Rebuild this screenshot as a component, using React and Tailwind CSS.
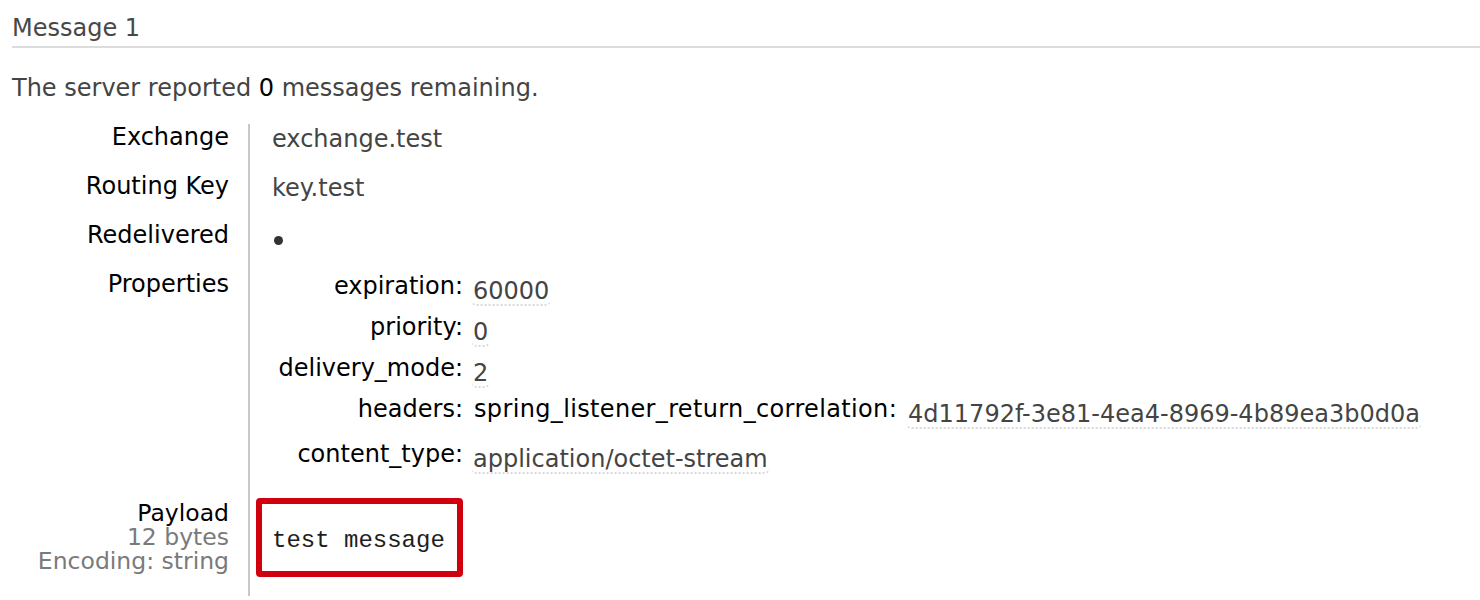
import React from 'react';

const font = { fontFamily: '"DejaVu Sans", Verdana, sans-serif' };

function Val({ children }) {
  return (
    <span className="inline-block rounded-[6px] border-b-2 border-dotted border-[#d8d8d8] px-[2px] leading-[26px] text-[#444]">
      {children}
    </span>
  );
}

function PropRow({ label, h = 'h-[41px]', children }) {
  return (
    <div className={`flex ${h} pt-[2px]`}>
      <div className="w-[191px] shrink-0 text-right leading-[26px] text-black">{label}</div>
      <div className="pl-[8px]">{children}</div>
    </div>
  );
}

function Row({ label, h, children }) {
  return (
    <div className={`grid grid-cols-[248px_1fr] ${h}`}>
      <div className="pr-[19px] text-right leading-[26px] text-black">{label}</div>
      <div className="border-l-2 border-[#c8c8c8] pl-[22px] pt-[2px] leading-[26px] text-[#444]">{children}</div>
    </div>
  );
}

export default function App() {
  return (
    <div className="min-h-[600px] bg-white pl-[12px] text-[24px]" style={font}>
      <div className="border-b-2 border-[#dcdcdc] pt-[15px] pb-[5px] leading-[26px] text-[#484848]">Message 1</div>
      <p className="mt-[27px] mb-[23px] leading-[26px] text-[#444]">
        The server reported <span className="text-black">0</span> messages remaining.
      </p>
      <div className="-ml-[12px]">
        <Row label="Exchange" h="h-[49px]">exchange.test</Row>
        <Row label="Routing Key" h="h-[49px]">key.test</Row>
        <Row label="Redelivered" h="h-[49px]">
          <span className="ml-[2px] inline-block h-[9px] w-[9px] rounded-full bg-[#333]" />
        </Row>
        <div className="grid grid-cols-[248px_1fr] h-[218px]">
          <div className="pr-[19px] text-right leading-[26px] text-black">Properties</div>
          <div className="border-l-2 border-[#c8c8c8] pl-[22px]">
            <PropRow label="expiration:"><Val>60000</Val></PropRow>
            <PropRow label="priority:"><Val>0</Val></PropRow>
            <PropRow label="delivery_mode:"><Val>2</Val></PropRow>
            <PropRow label="headers:" h="h-[45px]">
              <div className="flex pl-[3px]">
                <span className="leading-[26px] tracking-[0.35px] text-black">spring_listener_return_correlation:</span>
                <span className="ml-[9px]"><Val>4d11792f-3e81-4ea4-8969-4b89ea3b0d0a</Val></span>
              </div>
            </PropRow>
            <PropRow label="content_type:"><Val>application/octet-stream</Val></PropRow>
          </div>
        </div>
        <div className="grid grid-cols-[248px_1fr] h-[107px]">
          <div className="pr-[19px] pt-[12px] text-right text-[23.5px] leading-[24px]">
            <div className="text-black">Payload</div>
            <div className="text-[#7a7a7a]">12 bytes</div>
            <div className="text-[#7a7a7a]">Encoding: string</div>
          </div>
          <div className="border-l-2 border-[#c8c8c8] pl-[6px] pt-[9px]">
            <div className="flex h-[79px] w-[207px] items-center rounded-[4px] border-[6px] border-[#d0000f] pl-[10px] pt-[6px]">
              <span className="text-[24px] text-[#1e1e1e]" style={{ fontFamily: '"Liberation Mono", "Courier New", monospace' }}>
                test message
              </span>
            </div>
          </div>
        </div>
      </div>
    </div>
  );
}
